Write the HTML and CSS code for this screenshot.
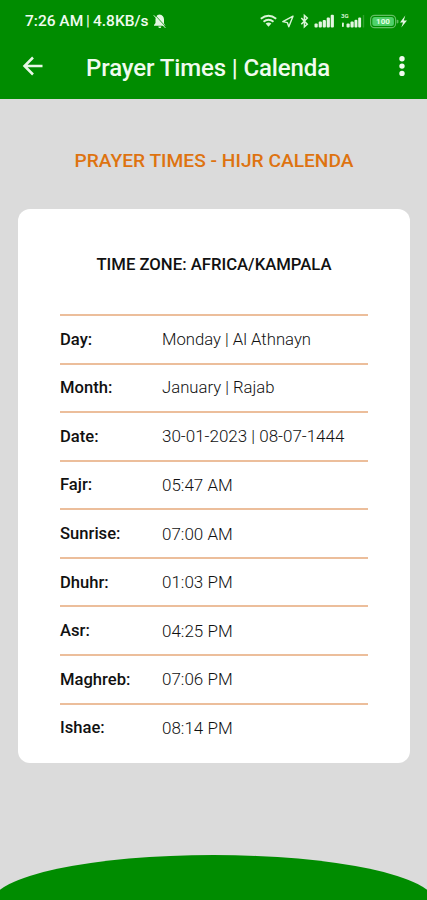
FILE: index.html
```html
<!DOCTYPE html>
<html lang="en">
<head>
    <meta charset="UTF-8">
    <meta name="viewport" content="width=device-width, initial-scale=1.0">
    <title>Prayer Times | Calenda</title>
    <link rel="stylesheet" href="styles.css">
</head>
<body>
    <header class="header">
        <div class="status">
            <span class="clock">7:26 AM</span>
            <span class="sep">|</span>
            <span class="speed">4.8KB/s</span>
            <svg class="bell" width="14" height="16" viewBox="0 0 14 16">
                <path d="M6.500 1.500c-3 .4-4 2.600-4 5v3.500L1 12v.8h11.500L11 10.500V6.500c0-2.400-1.500-4.600-4.500-5zM5.300 13.500h3a1.500 1.500 0 0 1-3 0z" fill="#e4f6e2"/>
                <path d="M1.500 1.500l11.500 12.500" stroke="#008c00" stroke-width=".8"/>
                <path d="M.8 2.300l11.500 12.500" stroke="#e4f6e2" stroke-width="1"/>
            </svg>
            <svg class="icons" width="150" height="20" viewBox="260 11 150 20">
                <!-- wifi -->
                <g fill="none" stroke="#d9f5d6" stroke-width="1.900">
                    <path d="M260.800 18.800q7.700-6 15.400 0"/>
                    <path d="M263.500 21.700q5-4 10 0"/>
                </g>
                <path d="M265.600 23.500q2.900-2 5.800 0l-2.900 3.200z" fill="#d9f5d6"/>
                <!-- location -->
                <path d="M293 16.200l-10.200 5.400 4.500 1 1.500 4.200z" fill="none" stroke="#d9f5d6" stroke-width="1.400" stroke-linejoin="round"/>
                <!-- bluetooth -->
                <path d="M301.300 18l6 6.200-2.900 2.600V15.400l2.900 2.600-6 6.200" fill="none" stroke="#d9f5d6" stroke-width="1.500"/>
                <!-- signal -->
                <g fill="#e4f6e2">
                    <rect x="314.500" y="23.500" width="3.200" height="4" rx="1"/>
                    <rect x="318.700" y="21.500" width="3.200" height="6" rx="1"/>
                    <rect x="322.700" y="20" width="3.200" height="7.500" rx="1"/>
                    <rect x="326.700" y="17.500" width="3.200" height="10" rx="1"/>
                    <rect x="330.700" y="14.800" width="3.200" height="12.700" rx="1"/>
                    <rect x="342" y="22.500" width="1.800" height="4.500" rx=".8"/>
                    <rect x="346.500" y="23.500" width="3.200" height="4" rx="1"/>
                    <rect x="350.500" y="21.500" width="3.200" height="6" rx="1"/>
                    <rect x="354.500" y="19.700" width="2.900" height="7.800" rx="1"/>
                    <rect x="358.200" y="17.500" width="2.900" height="10" rx="1"/>
                    <rect x="362.800" y="15" width="1.400" height="12.500" opacity=".2"/>
                </g>
                <text x="341" y="17.500" class="net">3G</text>
                <!-- battery -->
                <rect x="370.600" y="15.300" width="25" height="12.400" rx="4" fill="#008c00" stroke="#63bd63" stroke-width="1.200"/>
                <rect x="372.300" y="17" width="21.600" height="9" rx="2.500" fill="#4fd169"/>
                <rect x="396.700" y="19.800" width="1.700" height="3.600" rx=".8" fill="#63bd63"/>
                <text x="383" y="24.400" class="charge">100</text>
                <path d="M405.300 15.500l-5.300 7h3l-1.700 5 5.700-7h-3.200z" fill="#e4f6e2"/>
            </svg>
        </div>
        <div class="toolbar">
            <svg class="back" width="22" height="20" viewBox="0 0 22 20">
                <path d="M20.500 10H3M11 1.500L2.500 10l8.500 8.500" fill="none" stroke="#e8f8e6" stroke-width="2.500"/>
            </svg>
            <h1 class="title">Prayer Times | Calenda</h1>
            <svg class="more" width="6" height="22" viewBox="0 0 6 22">
                <g fill="#f0fbef">
                    <circle cx="3" cy="3.800" r="2.700"/>
                    <circle cx="3" cy="11.100" r="2.700"/>
                    <circle cx="3" cy="18.400" r="2.700"/>
                </g>
            </svg>
        </div>
    </header>

    <main class="content">
        <h2 class="heading">PRAYER TIMES - HIJR CALENDA</h2>
        <div class="card">
            <h3 class="zone">TIME ZONE: AFRICA/KAMPALA</h3>
            <dl class="times">
                <div class="row"><dt>Day:</dt><dd class="name">Monday | Al Athnayn</dd></div>
                <div class="row"><dt>Month:</dt><dd class="name">January | Rajab</dd></div>
                <div class="row"><dt>Date:</dt><dd>30-01-2023 | 08-07-1444</dd></div>
                <div class="row"><dt>Fajr:</dt><dd>05:47 AM</dd></div>
                <div class="row"><dt>Sunrise:</dt><dd>07:00 AM</dd></div>
                <div class="row"><dt>Dhuhr:</dt><dd>01:03 PM</dd></div>
                <div class="row"><dt>Asr:</dt><dd>04:25 PM</dd></div>
                <div class="row"><dt>Maghreb:</dt><dd>07:06 PM</dd></div>
                <div class="row"><dt>Ishae:</dt><dd>08:14 PM</dd></div>
            </dl>
        </div>
    </main>

    <svg class="curve" width="427" height="45" viewBox="0 0 427 45">
        <ellipse cx="213.500" cy="47" rx="221" ry="47" fill="#008c00"/>
    </svg>
</body>
</html>
```

FILE: styles.css
```css
* {
    box-sizing: border-box;
}
body {
    margin: 0;
    height: 900px;
    display: flex;
    flex-direction: column;
    overflow: hidden;
    background-color: #dbdbdb;
    font-family: Roboto, sans-serif;
}
h1, h2, h3, dl, dd {
    margin: 0;
}
svg {
    display: block;
    flex: none;
}
.header {
    height: 99px;
    flex: none;
    background-color: #008c00;
    color: #f0fbef;
}
.status {
    display: flex;
    align-items: center;
    height: 42px;
    padding: 0 17px 0 25px;
    font-size: 15.5px;
    font-weight: 500;
    white-space: nowrap;
}
.clock {
    width: 61px;
}
.sep {
    width: 7px;
    font-weight: 400;
}
.bell {
    margin-left: 4px;
}
.icons {
    margin-left: auto;
}
.net {
    font-size: 6px;
    font-weight: 700;
    fill: #d9f5d6;
}
.charge {
    font-size: 8px;
    font-weight: 700;
    text-anchor: middle;
    fill: #e4ffe4;
}
.toolbar {
    display: flex;
    align-items: center;
    height: 48px;
    padding: 0 22px;
}
.title {
    margin-left: 42px;
    padding-top: 3px;
    font-size: 24px;
    font-weight: 500;
    letter-spacing: -0.12px;
    white-space: nowrap;
}
.more {
    margin-left: auto;
}
.content {
    flex: 1;
    padding: 48px 17px 0 18px;
}
.heading {
    height: 26px;
    color: #de7310;
    font-size: 19.2px;
    font-weight: 500;
    line-height: 27px;
    text-align: center;
}
.card {
    height: 554px;
    margin-top: 36px;
    padding: 44px 42px 0;
    background-color: #fff;
    border-radius: 12px;
}
.zone {
    height: 61px;
    color: #111;
    font-size: 16.7px;
    font-weight: 500;
    line-height: 24px;
    text-align: center;
    white-space: nowrap;
}
.row {
    display: grid;
    grid-template-columns: 102px 1fr;
    align-items: center;
    height: 48.57px;
    border-top: 2px solid #ecbe9b;
    color: #111;
    white-space: nowrap;
}
.row dt {
    font-size: 16.6px;
    font-weight: 500;
}
.row dd {
    font-size: 17px;
    font-weight: 300;
}
.row .name {
    font-size: 16.7px;
}
.curve {
    width: 100%;
}
```
